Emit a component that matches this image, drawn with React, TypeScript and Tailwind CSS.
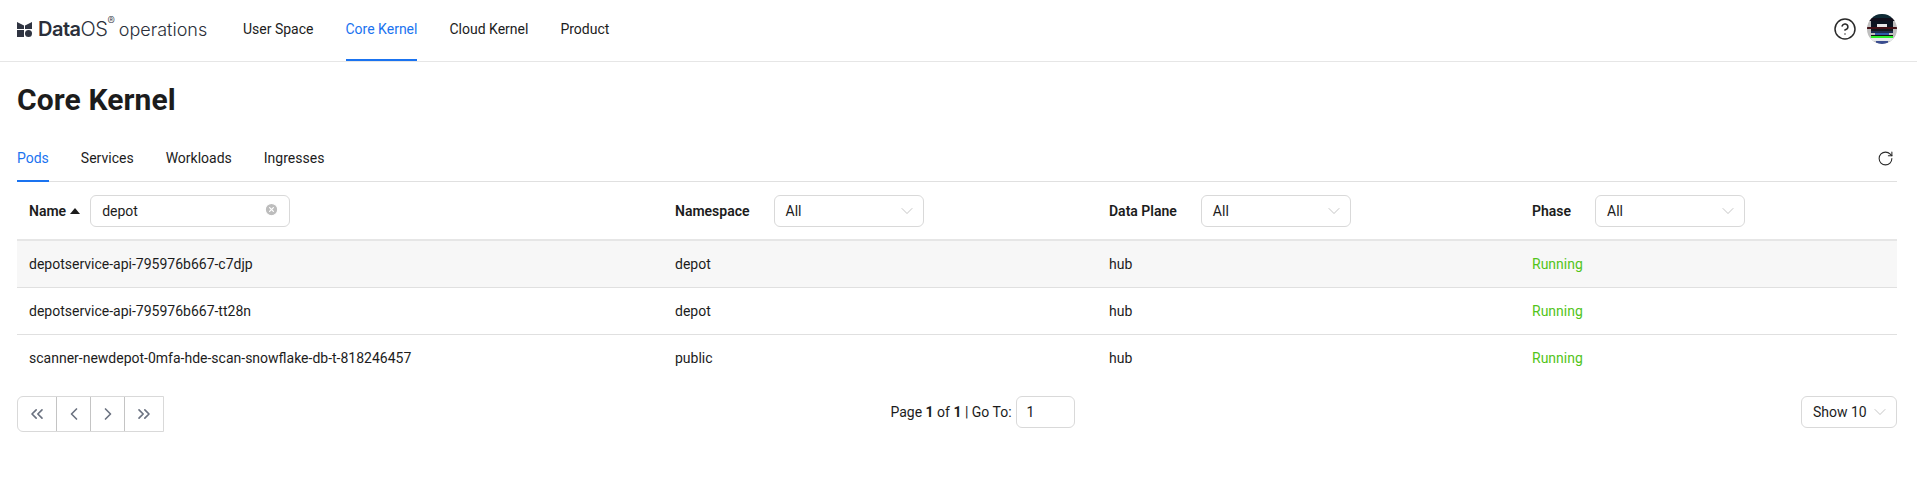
import React from "react";
import { ChevronDown, ChevronLeft, ChevronRight, ChevronsLeft, ChevronsRight, RotateCw, CircleHelp, CircleX } from "lucide-react";

function Select() {
  return (
    <div className="w-[150px] h-8 border border-[#d9d9d9] rounded-md flex items-center justify-between pl-[11px] pr-[6px] text-[14px] font-normal text-[#1c1c1c]">
      <span className="pt-px">All</span>
      <ChevronDown size={20} strokeWidth={0.8} className="text-[#a8a8a8]" />
    </div>
  );
}

function Avatar() {
  const bands: [number, number, string, number][] = [
    [0, 4, "#0e2a35", 30],
    [4, 3, "#120f1c", 30],
    [7, 3, "#0d1420", 22],
    [10, 3, "#e6e6e6", 10],
    [13, 2, "#431016", 30],
    [15, 2, "#14161c", 22],
    [17, 2, "#1a2b4c", 22],
    [19, 2, "#2d5aa6", 14],
    [21, 1, "#101010", 22],
    [22, 2, "#2cf02c", 22],
    [24, 3, "#e4e7ea", 22],
    [27, 3, "#3a4d90", 12],
  ];
  return (
    <svg width="30" height="30" viewBox="0 0 30 30" className="rounded-full">
      <rect width="30" height="30" fill="#bfbfbf" />
      <rect x="4" y="7" width="22" height="3" fill="#0d1420" />
      <rect x="4" y="10" width="22" height="3" fill="#0d1420" />
      {bands.map(([y, h, c, w], i) => (
        <rect key={i} x={15 - w / 2} y={y} width={w} height={h} fill={c} />
      ))}
    </svg>
  );
}

const rows = [
  ["depotservice-api-795976b667-c7djp", "depot", "hub", "Running"],
  ["depotservice-api-795976b667-tt28n", "depot", "hub", "Running"],
  ["scanner-newdepot-0mfa-hde-scan-snowflake-db-t-818246457", "public", "hub", "Running"],
];
const cols = "grid grid-cols-[646px_434px_423px_1fr]";

export default function App() {
  return (
    <div className="w-[1917px] h-[497px] bg-white text-[#1c1c1c] text-[14px] font-['Roboto',sans-serif] overflow-hidden">
      <header className="h-[62px] border-b border-[#e6e6e6] flex items-center pl-[17px] pr-5">
        <div className="flex items-center w-[226px] mb-[3px] font-['Inter',sans-serif] text-[#2b2f3a]">
          <svg width="15" height="15" viewBox="0 0 15 15" fill="#2f3441" className="mr-1.5">
            <path d="M0 0L7 3.4V7H0Z M15 0L8 3.4V7H15Z M0 8H7V15H0Z" />
            <circle cx="11.5" cy="11.5" r="3.5" />
          </svg>
          <span className="text-[20px] font-semibold tracking-[-0.5px]">Data</span>
          <span className="text-[20px] font-light tracking-[-0.5px]">OS</span>
          <span className="text-[11px] self-start mt-[-1px] font-light">®</span>
          <span className="text-[18px] font-light ml-1">operations</span>
        </div>
        <nav className="flex items-stretch gap-8 h-full">
          <a className="flex items-center border-b-2 border-transparent">User Space</a>
          <a className="flex items-center text-[#1a73f0] border-b-2 border-[#1a73f0]">Core Kernel</a>
          <a className="flex items-center border-b-2 border-transparent">Cloud Kernel</a>
          <a className="flex items-center border-b-2 border-transparent">Product</a>
        </nav>
        <div className="ml-auto flex items-center gap-[10px] mb-[3px]">
          <CircleHelp size={24} strokeWidth={1.5} className="text-[#2a2a2a]" />
          <Avatar />
        </div>
      </header>
      <main className="pl-[17px] pr-5">
        <h1 className="text-[30px] leading-[36px] font-bold mt-[20px] tracking-[0.1px] text-[#1c1c1c]">Core Kernel</h1>
        <div className="flex items-stretch gap-8 mt-[20px] h-[44px] border-b border-[#e0e0e0] relative">
          <a className="flex items-center text-[#1a73f0] border-b-2 border-[#1a73f0] mb-[-1px] pb-[2px]">Pods</a>
          <a className="flex items-center pb-[3px]">Services</a>
          <a className="flex items-center pb-[3px]">Workloads</a>
          <a className="flex items-center pb-[3px]">Ingresses</a>
          <RotateCw size={17} strokeWidth={1.5} className="absolute right-[3px] top-[12px] text-[#2a2a2a]" />
        </div>
        <div className={`${cols} h-[59px] items-center border-b-2 border-[#e6e6e6] font-semibold`}>
          <div className="pl-3 flex items-center">
            <span className="pt-px">Name</span>
            <span className="ml-1 w-0 h-0 border-x-[5px] border-x-transparent border-b-[6px] border-b-[#1c1c1c]"></span>
            <div className="ml-[10px] w-[200px] h-8 border border-[#d9d9d9] rounded-md flex items-center justify-between pl-[11px] pr-[10px] font-normal">
              <span className="pt-px">depot</span>
              <CircleX size={15} fill="#bdbdbd" stroke="#fff" className="mb-[3px]" />
            </div>
          </div>
          <div className="pl-3 flex items-center gap-[24px]"><span className="pt-px">Namespace</span><Select /></div>
          <div className="pl-3 flex items-center gap-[24px]"><span className="pt-px">Data Plane</span><Select /></div>
          <div className="pl-3 flex items-center gap-[24px]"><span className="pt-px">Phase</span><Select /></div>
        </div>
        {rows.map((r, i) => (
          <div key={i} className={`${cols} h-[47px] items-center ${i < 2 ? "border-b border-[#e0e0e0]" : ""} ${i === 0 ? "bg-[#f7f7f7]" : ""}`}>
            <div className="pl-3">{r[0]}</div>
            <div className="pl-3">{r[1]}</div>
            <div className="pl-3">{r[2]}</div>
            <div className="pl-3 text-[#52c41a]">{r[3]}</div>
          </div>
        ))}
        <div className="mt-[14px] flex items-start justify-between">
          <div className="flex h-[36px] border border-[#d9d9d9] rounded-l-md text-[#6b7280]">
            <div className="w-[39px] flex items-center justify-center border-r border-[#c4c4c4]"><ChevronsLeft size={20} strokeWidth={2} /></div>
            <div className="w-[34px] flex items-center justify-center border-r border-[#c4c4c4]"><ChevronLeft size={20} strokeWidth={2} /></div>
            <div className="w-[34px] flex items-center justify-center border-r border-[#c4c4c4]"><ChevronRight size={20} strokeWidth={2} /></div>
            <div className="w-[38px] flex items-center justify-center"><ChevronsRight size={20} strokeWidth={2} /></div>
          </div>
          <div className="flex items-center h-8 gap-1">
            <span>Page <b>1</b> of <b>1</b> | Go To:</span>
            <div className="w-[59px] h-8 border border-[#d9d9d9] rounded-md flex items-center pl-[10px]">1</div>
          </div>
          <div className="w-[96px] h-8 border border-[#d9d9d9] rounded-md flex items-center justify-between pl-[11px] pr-[6px]">
            <span>Show 10</span>
            <ChevronDown size={20} strokeWidth={0.8} className="text-[#a8a8a8]" />
          </div>
        </div>
      </main>
    </div>
  );
}
